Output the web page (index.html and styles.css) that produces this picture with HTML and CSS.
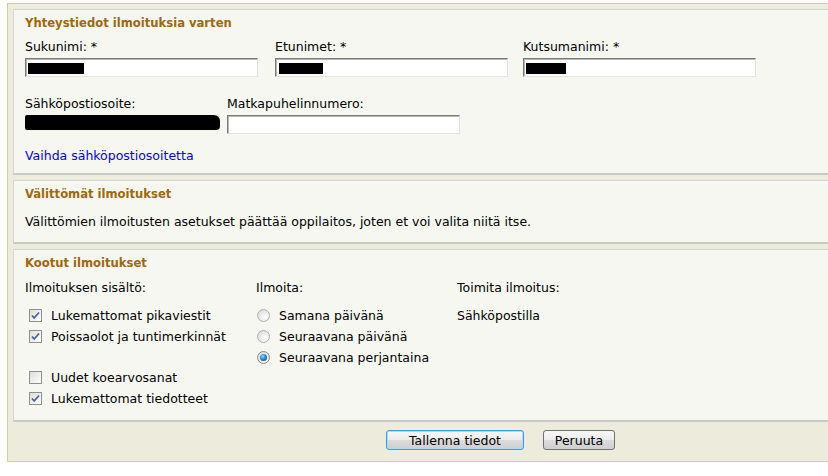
FILE: index.html
```html
<!DOCTYPE html>
<html lang="fi">
<head>
<meta charset="utf-8">
<title>Ilmoitusasetukset</title>
<link rel="stylesheet" href="styles.css">
</head>
<body>
<div class="page">
  <section class="panel panel-contact">
    <h2 class="panel-title">Yhteystiedot ilmoituksia varten</h2>
    <div class="name-row">
      <div class="field">
        <label class="label">Sukunimi: *</label>
        <div class="input"><span class="redact redact-1"></span></div>
      </div>
      <div class="field">
        <label class="label">Etunimet: *</label>
        <div class="input"><span class="redact redact-2"></span></div>
      </div>
      <div class="field">
        <label class="label">Kutsumanimi: *</label>
        <div class="input"><span class="redact redact-3"></span></div>
      </div>
    </div>
    <div class="contact-row">
      <div class="field">
        <label class="label">Sähköpostiosoite:</label>
        <div class="email-redact"></div>
      </div>
      <div class="field">
        <label class="label">Matkapuhelinnumero:</label>
        <div class="input"></div>
      </div>
    </div>
    <a class="link" href="#">Vaihda sähköpostiosoitetta</a>
  </section>

  <section class="panel panel-instant">
    <h2 class="panel-title">Välittömät ilmoitukset</h2>
    <p class="text">Välittömien ilmoitusten asetukset päättää oppilaitos, joten et voi valita niitä itse.</p>
  </section>

  <section class="panel panel-digest">
    <h2 class="panel-title">Kootut ilmoitukset</h2>
    <div class="digest-grid">
      <div class="col">
        <div class="col-head">Ilmoituksen sisältö:</div>
        <ul class="options">
          <li class="option"><span class="check checked"><svg viewBox="0 0 13 13" width="13" height="13"><path d="M3 6.5 L5.2 9 L10 3.5" fill="none" stroke="#4b5ea8" stroke-width="1.8"/></svg></span>Lukemattomat pikaviestit</li>
          <li class="option"><span class="check checked"><svg viewBox="0 0 13 13" width="13" height="13"><path d="M3 6.5 L5.2 9 L10 3.5" fill="none" stroke="#4b5ea8" stroke-width="1.8"/></svg></span>Poissaolot ja tuntimerkinnät</li>
          <li class="option option-empty"></li>
          <li class="option"><span class="check"></span>Uudet koearvosanat</li>
          <li class="option"><span class="check checked"><svg viewBox="0 0 13 13" width="13" height="13"><path d="M3 6.5 L5.2 9 L10 3.5" fill="none" stroke="#4b5ea8" stroke-width="1.8"/></svg></span>Lukemattomat tiedotteet</li>
        </ul>
      </div>
      <div class="col">
        <div class="col-head">Ilmoita:</div>
        <ul class="options">
          <li class="option radio-option"><span class="radio"></span>Samana päivänä</li>
          <li class="option radio-option"><span class="radio"></span>Seuraavana päivänä</li>
          <li class="option radio-option"><span class="radio selected"></span>Seuraavana perjantaina</li>
        </ul>
      </div>
      <div class="col">
        <div class="col-head">Toimita ilmoitus:</div>
        <ul class="options">
          <li class="option plain">Sähköpostilla</li>
        </ul>
      </div>
    </div>
  </section>

  <div class="actions">
    <button class="btn btn-primary" type="button">Tallenna tiedot</button>
    <button class="btn" type="button">Peruuta</button>
  </div>
</div>
</body>
</html>
```
FILE: styles.css
```css
html, body {
  margin: 0;
  padding: 0;
  background: #ffffff;
  overflow: hidden;
}

body {
  font-family: "DejaVu Sans", sans-serif;
  font-size: 12.5px;
  line-height: 16px;
  color: #000000;
}

.page {
  margin: 3px -40px 0 7px;
  background: #ecebdc;
  border: 1px solid #d2cf9f;
  padding: 5px 0 0 5px;
  height: 459px;
  box-sizing: border-box;
}

.panel {
  background: #f7f7f2;
  border: 1px solid #d6d6d0;
  border-bottom: 2px solid #c9c9c5;
  padding: 5px 11px 0 11px;
  margin-bottom: 5px;
}

.panel-title {
  margin: 0;
  font-family: "DejaVu Sans Condensed", "DejaVu Sans", sans-serif;
  font-size: 12.9px;
  line-height: 16px;
  font-weight: bold;
  color: #a0680a;
}

.label {
  display: block;
  margin-bottom: 3px;
}

.name-row {
  display: grid;
  grid-template-columns: 250px 248px 234px;
  margin-top: 8px;
}

.contact-row {
  display: grid;
  grid-template-columns: 202px 233px;
  margin-top: 19px;
}

.input {
  width: 233px;
  height: 19px;
  box-sizing: border-box;
  background: #ffffff;
  border: 1px solid;
  border-color: #7b7b7b #e2e2e2 #e2e2e2 #7b7b7b;
  box-shadow: inset 1px 1px 0 #b5b5b5;
  position: relative;
}

.redact {
  position: absolute;
  top: 4px;
  left: 2px;
  height: 11px;
  background: #000000;
}

.redact-1 { width: 56px; }
.redact-2 { width: 44px; left: 3px; }
.redact-3 { width: 40px; }

.email-redact {
  width: 195px;
  height: 15px;
  margin-top: 1px;
  background: #000000;
  border-radius: 2px 6px 4px 2px;
}

.link {
  display: block;
  margin-top: 14px;
  color: #0000ee;
  text-decoration: none;
  width: max-content;
}

.panel-contact {
  padding-bottom: 9px;
}

.text {
  margin: 12px 0 0 0;
}

.panel-instant {
  padding-bottom: 12px;
}

.panel-digest {
  padding-bottom: 11px;
}

.digest-grid {
  display: grid;
  grid-template-columns: 231px 201px auto;
  margin-top: 9px;
}

.col-head {
  line-height: 16px;
}

.options {
  list-style: none;
  margin: 9px 0 0 0;
  padding: 0;
}

.option {
  display: flex;
  align-items: center;
  height: 21px;
}

.option-empty {
  height: 20px;
}

.check {
  width: 13px;
  height: 13px;
  box-sizing: border-box;
  border: 1px solid #8e8f8f;
  background: linear-gradient(135deg, #dcdcd8 0%, #f2f2ef 60%, #ffffff 100%);
  margin: 0 9px 0 4px;
  display: inline-flex;
  align-items: center;
  justify-content: center;
  flex: none;
}

.check svg {
  display: block;
  margin: -1px;
}

.radio {
  width: 13px;
  height: 13px;
  box-sizing: border-box;
  border-radius: 50%;
  border: 1px solid #b0b0b0;
  background: radial-gradient(circle at 65% 65%, #ffffff 0%, #eeeeee 40%, #d2d2d2 100%);
  margin: 0 9px 0 1px;
  flex: none;
  position: relative;
}

.radio.selected {
  border-color: #8a8a8a;
}

.radio.selected::after {
  content: "";
  position: absolute;
  left: 2px;
  top: 2px;
  width: 7px;
  height: 7px;
  border-radius: 50%;
  background: radial-gradient(circle at 40% 35%, #9ad6ff 0%, #2b86d0 45%, #0b3c78 100%);
}

.actions {
  display: flex;
  gap: 19px;
  padding-left: 373px;
  margin-top: 8px;
}

.btn {
  font-family: "DejaVu Sans", sans-serif;
  font-size: 12.5px;
  height: 20px;
  padding: 0;
  box-sizing: border-box;
  border: 1px solid #707070;
  border-radius: 3px;
  background: linear-gradient(#f8f8f8 0%, #ececec 50%, #dcdcdc 51%, #cfcfcf 100%);
  color: #000000;
  width: 72px;
}

.btn-primary {
  width: 138px;
  border-color: #3c9fdc;
  box-shadow: inset 0 0 0 1px #a8dcf6;
}
```
